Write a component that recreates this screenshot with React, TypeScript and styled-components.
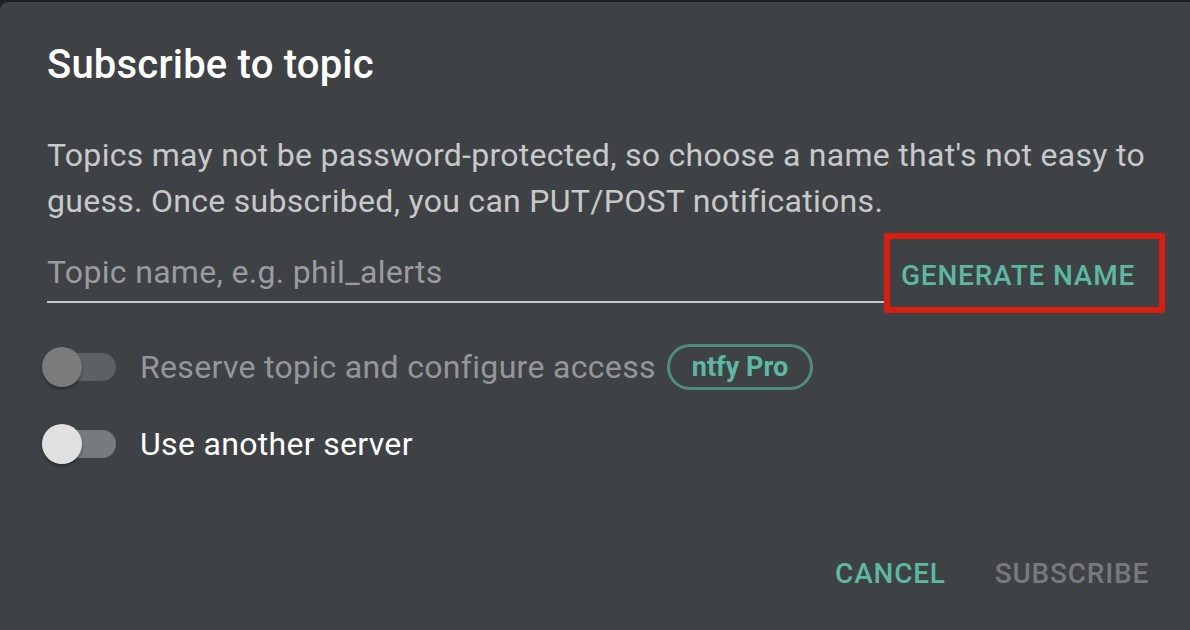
import React from "react";
import styled, { createGlobalStyle } from "styled-components";

const Global = createGlobalStyle`
  html, body { margin: 0; padding: 0; background: #1e2022; }
  body { font-family: Roboto, "Noto Sans", "Liberation Sans", sans-serif; }
  * { box-sizing: border-box; }
`;

const Dialog = styled.div`
  margin-top: 2px;
  width: 1190px;
  height: 628px;
  background: #3e4245;
  border-top-left-radius: 8px;
  display: flex;
  flex-direction: column;
  color: #fff;
`;

const Title = styled.h2`
  margin: 0;
  padding: 31px 47px 0;
  font-size: 40px;
  font-weight: 500;
  line-height: 64px;
  letter-spacing: 0.005em;
  color: #fff;
`;

const Content = styled.div`
  padding: 35px 47px 0;
  display: flex;
  flex-direction: column;
`;

const Description = styled.p`
  margin: 0 -12px 0 0;
  font-size: 32px;
  line-height: 46px;
  letter-spacing: 0.009em;
  color: rgba(255, 255, 255, 0.72);
`;

const InputRow = styled.div`
  display: flex;
  align-items: center;
  margin-top: 9px;
`;

const Field = styled.div`
  flex: 1;
  border-bottom: 2px solid #c6c8c9;
  height: 60px;
  display: flex;
  align-items: center;
`;

const Placeholder = styled.span`
  font-size: 32px;
  color: #9a9c9e;
  letter-spacing: 0.01em;
`;

const Highlight = styled.div`
  margin-right: -22px;
  border: 6px solid #d91e11;
  border-radius: 3px;
  width: 281px;
  height: 80px;
  display: flex;
  align-items: center;
  padding-left: 11px;
  padding-top: 4px;
`;

const TextButton = styled.button<{ $disabled?: boolean }>`
  background: none;
  border: none;
  padding: 0;
  font-family: inherit;
  font-size: 28px;
  font-weight: 500;
  letter-spacing: 0.028em;
  text-transform: uppercase;
  white-space: nowrap;
  color: ${(p) => (p.$disabled ? "#767a7d" : "#5cb8a0")};
  cursor: pointer;
`;

const SwitchRow = styled.div<{ $first?: boolean }>`
  display: flex;
  align-items: center;
  height: 58px;
  margin-top: ${(p) => (p.$first ? "25px" : "19px")};
  margin-left: -5px;
`;

const Switch = styled.div<{ $disabled?: boolean }>`
  position: relative;
  width: 74px;
  height: 28px;
  border-radius: 14px;
  background: ${(p) => (p.$disabled ? "#5c6164" : "#777b7e")};
  margin-right: 24px;
  flex-shrink: 0;
`;

const Thumb = styled.div<{ $disabled?: boolean }>`
  position: absolute;
  left: 0;
  top: -6px;
  width: 40px;
  height: 40px;
  border-radius: 50%;
  background: ${(p) => (p.$disabled ? "#7a7b7c" : "#e0e0e0")};
  box-shadow: 0 2px 3px rgba(0, 0, 0, 0.35);
`;

const Label = styled.span<{ $disabled?: boolean }>`
  font-size: 32px;
  letter-spacing: 0.01em;
  color: ${(p) => (p.$disabled ? "#94979a" : "#fff")};
`;

const Chip = styled.span`
  margin-left: 11px;
  height: 46px;
  padding: 0 22px;
  border: 3px solid #4f8d7c;
  border-radius: 23px;
  display: inline-flex;
  align-items: center;
  font-size: 27px;
  font-weight: 700;
  color: #5cb8a0;
`;

const Actions = styled.div`
  margin-top: auto;
  padding: 0 41px 40px;
  display: flex;
  justify-content: flex-end;
  gap: 49px;
`;

export default function App() {
  return (
    <>
      <Global />
      <Dialog>
        <Title>Subscribe to topic</Title>
        <Content>
          <Description>
            Topics may not be password-protected, so choose a name that's not easy to guess. Once
            subscribed, you can PUT/POST notifications.
          </Description>
          <InputRow>
            <Field>
              <Placeholder>Topic name, e.g. phil_alerts</Placeholder>
            </Field>
            <Highlight>
              <TextButton>Generate name</TextButton>
            </Highlight>
          </InputRow>
          <SwitchRow $first>
            <Switch $disabled>
              <Thumb $disabled />
            </Switch>
            <Label $disabled>Reserve topic and configure access</Label>
            <Chip>ntfy Pro</Chip>
          </SwitchRow>
          <SwitchRow>
            <Switch>
              <Thumb />
            </Switch>
            <Label>Use another server</Label>
          </SwitchRow>
        </Content>
        <Actions>
          <TextButton>Cancel</TextButton>
          <TextButton $disabled>Subscribe</TextButton>
        </Actions>
      </Dialog>
    </>
  );
}
